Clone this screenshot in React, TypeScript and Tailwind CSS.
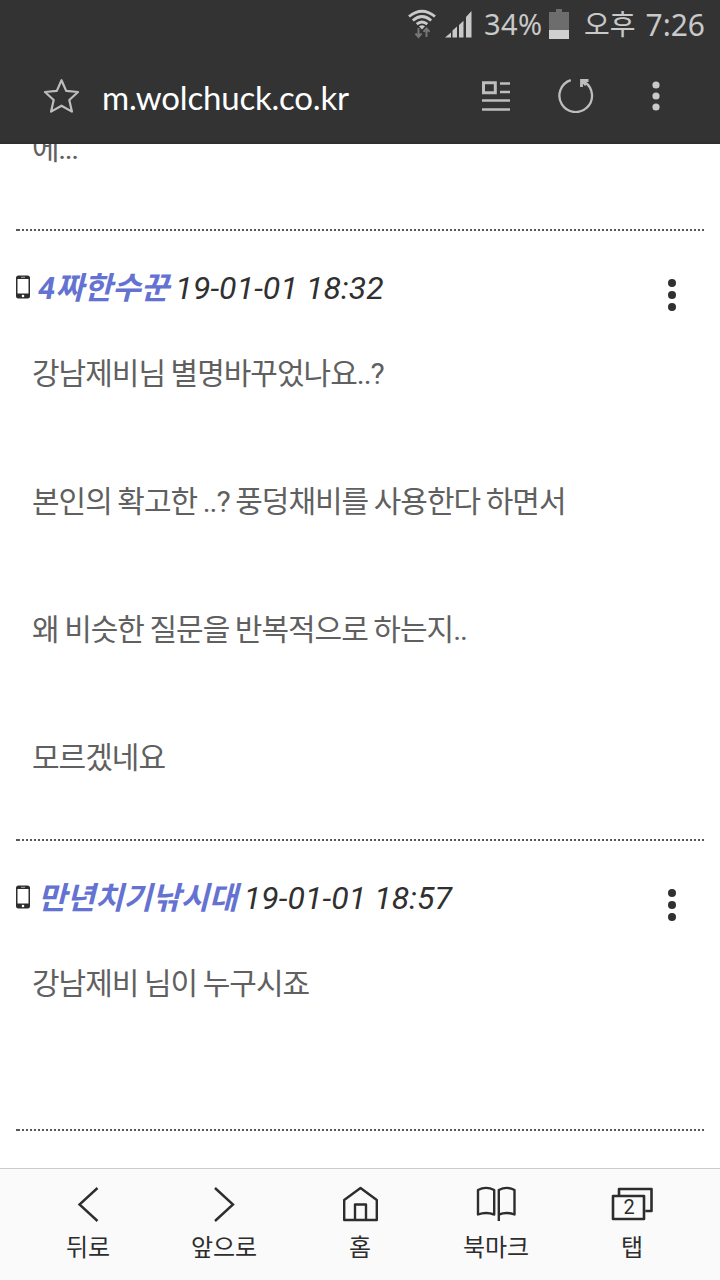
import React from "react";

type Comment = {
  name: string;
  date: string;
  lines: string[];
};

const comments: Comment[] = [
  {
    name: "4짜한수꾼",
    date: "19-01-01 18:32",
    lines: [
      "강남제비님 별명바꾸었나요..?",
      "",
      "본인의 확고한 ..? 풍덩채비를 사용한다 하면서",
      "",
      "왜 비슷한 질문을 반복적으로 하는지..",
      "",
      "모르겠네요",
    ],
  },
  {
    name: "만년치기낚시대",
    date: "19-01-01 18:57",
    lines: ["강남제비 님이 누구시죠", ""],
  },
];

const Dots = ({ className }: { className: string }) => (
  <svg viewBox="0 0 10 34" className={className} fill="currentColor">
    <circle cx="5" cy="5" r="4" />
    <circle cx="5" cy="17" r="4" />
    <circle cx="5" cy="29" r="4" />
  </svg>
);

const Divider = () => (
  <div className="mx-4 h-0.5 border-l-2 border-[#585858] bg-[repeating-linear-gradient(90deg,#585858_0_2px,transparent_2px_4px)]" />
);

const StatusBar = () => (
  <div className="flex h-12 items-center justify-end pr-4 font-['Noto_Sans',Roboto,'Noto_Sans_CJK_KR',sans-serif] text-[#c9c9c9]">
    <svg width="30" height="30" viewBox="0 0 30 30" fill="none" className="mr-2">
      <g stroke="#c9c9c9" strokeWidth="2.8">
        <path d="M2 7.5Q15-3 28 7.5" />
        <path d="M5.8 11.5Q15 3.6 24.2 11.5" />
        <path d="M9.7 15.2Q15 10.8 20.3 15.2" />
      </g>
      <path d="M12 17.3Q15 15 18 17.3L15 20.5Z" fill="#c9c9c9" />
      <path
        d="M11.5 19V27.5M8.5 24.5l3 3.5 3-3.5M19.5 28V20M16.5 22.8l3-3.4 3 3.4"
        stroke="#777"
        strokeWidth="2"
      />
    </svg>
    <svg width="27" height="27" viewBox="0 0 27 27" fill="#c9c9c9" className="mr-3">
      <path d="M0 26.5L6 21.5V26.5ZM7.5 26.5V19.5L12 15.5V26.5ZM14 26.5V14L18.5 9.8V26.5ZM21 26.5V6L26.5 0V26.5Z" />
    </svg>
    <span className="mr-[7px] w-[58px] text-[29px] tracking-[0.4px]">34%</span>
    <svg width="20" height="30" viewBox="0 0 20 30" className="mr-[15px]">
      <path d="M0 3H7V0H13V3H20V30H0Z" fill="#6d6d6d" />
      <path d="M0 21H20V30H0Z" fill="#d0d0d0" />
    </svg>
    <span className="mr-2.5 text-[28px]">오후</span>
    <span className="-mr-px text-[30px]">7:26</span>
  </div>
);

const AddressBar = () => (
  <div className="flex h-24 items-center border-b-2 border-[#2f2f2f] text-[#bdbdbd]">
    <svg
      width="36"
      height="36"
      viewBox="0 0 36 36"
      fill="none"
      stroke="currentColor"
      strokeWidth="2.2"
      strokeLinejoin="round"
      className="mt-0.5 ml-[43px]"
    >
      <path d="M18.5 2.2L23.2 12.9L35 14L26.3 22L28.9 33.6L18.5 27.7L8.1 33.6L10.7 22L2 14L13.8 12.9Z" />
    </svg>
    <span className="ml-[23px] flex-1 pt-1.5 font-[Lato,'Noto_Sans_CJK_KR',sans-serif] text-[33px] tracking-[-0.2px] text-white">
      m.wolchuck.co.kr
    </span>
    <svg width="28" height="31" viewBox="0 0 28 31" fill="none" stroke="currentColor" className="mt-0.5 mr-[47px]">
      <path d="M1.5 1.7H13.3V11.7H1.5Z" strokeWidth="3" />
      <path d="M18 2.5H28M18 11H28M0 19.5H28M0 28.5H28" strokeWidth="2.6" />
    </svg>
    <svg width="37" height="36" viewBox="0 0 37 36" fill="none" stroke="currentColor" className="mr-[58px]">
      <path d="M13.8 3.2A16.3 16.3 0 1 0 27.5 5" strokeWidth="2.3" />
      <path d="M24.5 10V3.5H31.5M25 4L29 8" strokeWidth="2.8" />
    </svg>
    <svg width="8" height="30" viewBox="0 0 8 30" fill="#c9c9c9" className="mt-0.5 mr-[60px]">
      <circle cx="4" cy="4" r="3.6" />
      <circle cx="4" cy="15" r="3.6" />
      <circle cx="4" cy="26" r="3.6" />
    </svg>
  </div>
);

const CommentItem = ({ comment }: { comment: Comment }) => (
  <article>
    <div className="flex h-[111px] items-start px-4 pt-[35px]">
      <svg width="14" height="24" viewBox="0 0 14 24" className="mt-[9px]">
        <rect width="14" height="23" y=".5" rx="2.5" fill="#2d2d2d" />
        <rect x="1.5" y="4" width="11" height="14.5" fill="#fff" />
        <path d="M5 2.3H9" stroke="#aaa" />
        <circle cx="7" cy="21" r="1.3" fill="#fff" />
      </svg>
      <div className="ml-2 flex-1 text-[32px] leading-[44px] text-[#303030] italic">
        <b className="text-[31px] tracking-[0px] text-[#6472d2]">{comment.name}</b>
        <span className="ml-1.5 tracking-[0.1px]">{comment.date}</span>
      </div>
      <Dots className="mt-3 mr-[27px] h-[34px] w-2.5" />
    </div>
    <div className="px-8 pb-[49px] text-[30px] leading-[64px] tracking-[-1px] text-[#606060] [word-spacing:-0.9px]">
      {comment.lines.map((line, i) => (
        <p key={i} className="h-16 whitespace-nowrap">
          {line}
        </p>
      ))}
    </div>
    <Divider />
  </article>
);

const TabItem = ({ label, children }: { label: string; children: React.ReactNode }) => (
  <button className="flex w-[136px] flex-col items-center">
    <svg
      width="44"
      height="40"
      viewBox="0 0 44 40"
      fill="none"
      stroke="#2d2d2d"
      strokeWidth="2.4"
    >
      {children}
    </svg>
    <span className="mt-1 text-[24px] leading-[38px]">{label}</span>
  </button>
);

const BottomNav = () => (
  <nav className="flex h-28 justify-center border-t border-[#cbcbcb] bg-[#fafafa] pt-4 text-[#2d2d2d]">
    <TabItem label="뒤로">
      <path d="M31.5 3L13.5 19.5L31.5 36" />
    </TabItem>
    <TabItem label="앞으로">
      <path d="M13 3L31 19.5L13 36" />
    </TabItem>
    <TabItem label="홈">
      <path d="M6.2 15L22.5 3L38.8 15V35H6.2ZM17 35V19.5H28V35" strokeLinejoin="round" />
    </TabItem>
    <TabItem label="북마크">
      <path
        d="M4 5Q12 .8 20.2 5V29.5Q12 26.5 4 29.5ZM24.8 36V5Q33 .8 40.5 5V29.5Q33 26.5 24.8 29.5"
        strokeLinejoin="round"
      />
    </TabItem>
    <TabItem label="탭">
      <path d="M9 10.5V4H41.5V26H35.5M3 11H34V34H3Z" strokeWidth="2.6" strokeLinejoin="round" />
      <text x="19" y="29" textAnchor="middle" fontSize="20" fill="#2d2d2d" stroke="none">
        2
      </text>
    </TabItem>
  </nav>
);

const App = () => {
  return (
    <div className="flex h-[1280px] w-[720px] flex-col overflow-hidden bg-white font-[Roboto,'Noto_Sans_CJK_KR',sans-serif] text-[#303030]">
      <header className="bg-[#333333]">
        <StatusBar />
        <AddressBar />
      </header>
      <main className="flex-1 overflow-hidden">
        <p className="-mt-[27px] mb-12 h-16 px-8 text-[30px] leading-[64px] tracking-[-1.4px] text-[#606060]">
          에...
        </p>
        <Divider />
        {comments.map((comment) => (
          <CommentItem key={comment.name} comment={comment} />
        ))}
      </main>
      <BottomNav />
    </div>
  );
};

export default App;
